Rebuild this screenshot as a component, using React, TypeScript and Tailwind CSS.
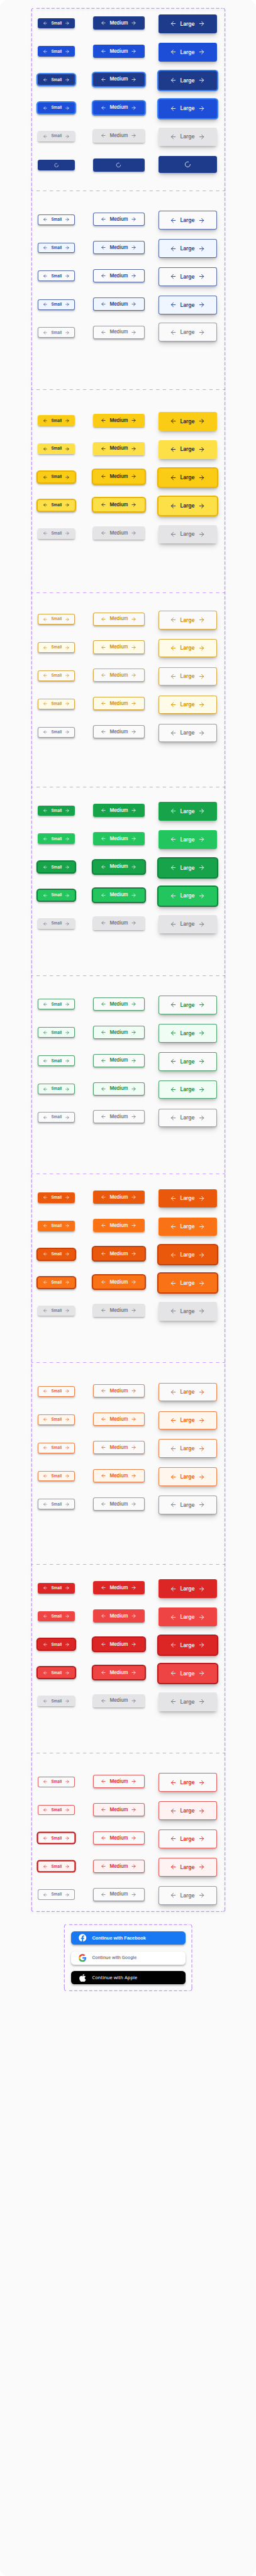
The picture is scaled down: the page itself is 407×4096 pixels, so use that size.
import { ArrowLeft, ArrowRight, LoaderCircle } from "lucide-react";
import { FaApple, FaFacebook } from "react-icons/fa";
import clsx from "clsx";

type Size = "sm" | "md" | "lg";

const SIZES: Record<
  Size,
  { label: string; box: string; text: string; icon: string; offset: string; shadow: string; ringShadow: string }
> = {
  sm: {
    label: "Small",
    box: "w-[59.2px] h-[16.9px] gap-[5.2px]",
    text: "w-[16.8px] text-[6.34px]",
    icon: "size-[7.9px]",
    offset: "mt-[5.28px]",
    shadow: "shadow-[0_2px_3px_-0.5px_rgb(0_0_0/0.2),0_1px_1.5px_-0.5px_rgb(0_0_0/0.12)]",
    ringShadow: "shadow-[0_2px_3px_1.5px_rgb(0_0_0/0.2),0_1px_1.5px_1.5px_rgb(0_0_0/0.12)]",
  },
  md: {
    label: "Medium",
    box: "w-[81.9px] h-[21.1px] gap-[5.1px]",
    text: "w-[28.9px] text-[7.4px]",
    icon: "size-[9px]",
    offset: "mt-[2.64px]",
    shadow: "shadow-[0_2px_3px_-0.5px_rgb(0_0_0/0.2),0_1px_1.5px_-0.5px_rgb(0_0_0/0.12)]",
    ringShadow: "shadow-[0_2px_3px_1.5px_rgb(0_0_0/0.2),0_1px_1.5px_1.5px_rgb(0_0_0/0.12)]",
  },
  lg: {
    label: "Large",
    box: "w-[93px] h-[29.6px] gap-[5.2px]",
    text: "w-[23px] text-[8.45px]",
    icon: "size-[11.1px]",
    offset: "",
    shadow: "shadow-[0_5.3px_8px_-1.6px_rgb(0_0_0/0.18),0_2.1px_3.2px_-1px_rgb(0_0_0/0.15)]",
    ringShadow: "shadow-[0_5.3px_8px_0.5px_rgb(0_0_0/0.18),0_2.1px_3.2px_1px_rgb(0_0_0/0.15)]",
  },
};

type Look = { skin: string; ring?: string };

type ButtonProps = Look & { size: Size; offset?: string; flat?: boolean; loading?: boolean };

function Button({ size, skin, ring, offset, flat, loading }: ButtonProps) {
  const s = SIZES[size];
  return (
    <div className={clsx("shrink-0", offset ?? s.offset)}>
      <div className={clsx("rounded-[3.2px]", !flat && (ring ? s.ringShadow : s.shadow))}>
        <button
          className={clsx(
            "flex items-center justify-center rounded-[3.2px] font-semibold leading-none",
            loading && size === "lg" ? "h-[27.5px] w-[93px]" : s.box,
            skin,
            ring,
          )}
        >
          {loading ? (
            <LoaderCircle
              className={size === "sm" ? "size-[7.6px]" : size === "md" ? "size-[8.8px]" : "size-[10.8px]"}
              strokeWidth={2}
            />
          ) : (
            <>
              <ArrowLeft className={clsx("shrink-0", s.icon)} strokeWidth={2} />
              <span className={clsx("flex shrink-0 justify-center whitespace-nowrap", s.text)}>{s.label}</span>
              <ArrowRight className={clsx("shrink-0", s.icon)} strokeWidth={2} />
            </>
          )}
        </button>
      </div>
    </div>
  );
}

type RowProps = {
  looks: [Look, Look, Look];
  offsets?: [string, string, string];
  flatSmall?: boolean;
  loading?: boolean;
};

function Row({ looks, offsets, flatSmall, loading }: RowProps) {
  return (
    <div className="flex h-[44.9px] items-start">
      <Button size="sm" {...looks[0]} offset={offsets?.[0]} flat={flatSmall} loading={loading} />
      <div className="w-[28.5px] shrink-0" />
      <Button size="md" {...looks[1]} offset={offsets?.[1]} loading={loading} />
      <div className="w-[21.7px] shrink-0" />
      <Button size="lg" {...looks[2]} offset={offsets?.[2]} loading={loading} />
    </div>
  );
}

const all = (skin: string, ring?: string): [Look, Look, Look] => [
  { skin, ring },
  { skin, ring },
  { skin, ring },
];

const DISABLED = "bg-[#e4e4e7] text-[#71717a]";
const DISABLED_OUTLINE = "border border-[#71717a]/70 bg-[#fafafa] text-[#71717a]";

type SectionData = { frame: string; rows: RowProps[] };

const filled = (frame: string, base: string, hover: string, ring: string): SectionData => ({
  frame,
  rows: [
    { looks: all(base) },
    { looks: all(hover) },
    { looks: all(base, ring) },
    { looks: all(hover, ring) },
    { looks: all(DISABLED) },
  ],
});

const outlined = (frame: string, base: string, hover: string): SectionData => ({
  frame,
  rows: [
    { looks: all(base) },
    { looks: all(hover) },
    { looks: all(base) },
    { looks: all(hover) },
    { looks: all(DISABLED_OUTLINE) },
  ],
});

const blue = filled(
  "h-[290.98px] pt-[10.57px]",
  "bg-[#1e3a8a] text-[#fafafa]",
  "bg-[#1d4ed8] text-[#fafafa]",
  "ring-[2.1px] ring-[#3b82f6]",
);
blue.rows.push({
  looks: all("bg-[#1e3a8a] text-[#fafafa]"),
  offsets: ["mt-[6.34px]", "mt-[4.2px]", ""],
  loading: true,
});

const blueOutline = outlined(
  "h-[315.39px] pt-[31.8px]",
  "border border-[#1e3a8a]/75 bg-[#fafafa] text-[#1e3a8a]",
  "border border-[#1e3a8a]/75 bg-[#eff6ff] text-[#1e3a8a]",
);
blueOutline.rows[3].offsets = ["mt-[5.8px]", "mt-[3.17px]", ""];
blueOutline.rows[4].offsets = ["mt-[5.28px]", "mt-[2.64px]", "-mt-[1.6px]"];

const redBase = "border border-[#dc2626]/75 bg-[#fafafa] text-[#dc2626]";
const redHover = "border border-[#dc2626]/75 bg-[#fef2f2] text-[#dc2626]";
const redRing = "ring-[1.6px] ring-[#b91c1c]";
const redOutline: SectionData = {
  frame: "h-[251.7px] pt-[31.9px]",
  rows: [
    { looks: all(redBase), flatSmall: true },
    { looks: all(redHover), flatSmall: true },
    { looks: [{ skin: redBase, ring: redRing }, { skin: redBase }, { skin: redBase }], flatSmall: true },
    { looks: [{ skin: redHover, ring: redRing }, { skin: redHover }, { skin: redHover }], flatSmall: true },
    { looks: all(DISABLED_OUTLINE), flatSmall: true },
  ],
};

const SECTIONS: SectionData[] = [
  blue,
  blueOutline,
  filled(
    "h-[323.3px] pt-[36.03px]",
    "bg-[#facc15] text-[#18181b]",
    "bg-[#fde047] text-[#18181b]",
    "ring-[2.1px] ring-[#eab308]",
  ),
  outlined(
    "h-[309.05px] pt-[28.63px]",
    "border border-[#ca8a04]/75 bg-[#fafafa] text-[#ca8a04]",
    "border border-[#ca8a04]/75 bg-[#fefce8] text-[#ca8a04]",
  ),
  filled(
    "h-[300px] pt-[23.88px]",
    "bg-[#16a34a] text-[#fafafa]",
    "bg-[#22c55e] text-[#fafafa]",
    "ring-[2.1px] ring-[#15803d]",
  ),
  outlined(
    "h-[315.4px] pt-[31.85px]",
    "border border-[#15803d]/75 bg-[#fafafa] text-[#15803d]",
    "border border-[#15803d]/75 bg-[#f0fdf4] text-[#15803d]",
  ),
  filled(
    "h-[300.05px] pt-[23.93px]",
    "bg-[#ea580c] text-[#fafafa]",
    "bg-[#f97316] text-[#fafafa]",
    "ring-[2.1px] ring-[#c2410c]",
  ),
  outlined(
    "h-[320.75px] pt-[31.85px]",
    "border border-[#ea580c]/75 bg-[#fafafa] text-[#ea580c]",
    "border border-[#ea580c]/75 bg-[#fff7ed] text-[#ea580c]",
  ),
  filled(
    "h-[299.95px] pt-[23.88px]",
    "bg-[#dc2626] text-[#fafafa]",
    "bg-[#ef4444] text-[#fafafa]",
    "ring-[2.1px] ring-[#b91c1c]",
  ),
  redOutline,
];

/* Dashed outline, 10 on / 5 off on every side, with solid rounded corners. */
function DashedOutline({ w, h, className }: { w: number; h: number; className?: string }) {
  const r = w - 0.5;
  const b = h - 0.5;
  return (
    <svg
      className={clsx("pointer-events-none absolute inset-0 size-full overflow-visible", className)}
      viewBox={`0 0 ${w} ${h}`}
      preserveAspectRatio="none"
      fill="none"
      stroke="#9747ff"
      strokeWidth="1.3"
    >
      <path d={`M0.5 10V5.5A5 5 0 0 1 5.5 0.5M${r - 5} 0.5A5 5 0 0 1 ${r} 5.5V10`} />
      <path d={`M0.5 ${b - 10}V${b - 5}A5 5 0 0 0 5.5 ${b}M${r - 5} ${b}A5 5 0 0 0 ${r} ${b - 5}V${b - 10}`} />
      <path strokeDasharray="10 5" d={`M15 0.5H${w - 8}M15 ${b}H${w - 8}M0.5 15V${h - 10}M${r} 15V${h - 10}`} />
    </svg>
  );
}

function Divider() {
  return (
    <svg
      className="absolute inset-x-0 -bottom-[0.5px] h-px w-full"
      viewBox="0 0 582.5 2"
      preserveAspectRatio="none"
      stroke="#c9a0ff"
      strokeWidth="2"
    >
      <path strokeDasharray="10 10" strokeDashoffset="5" d="M0 1H582.5" />
    </svg>
  );
}

function GoogleMark() {
  return (
    <svg viewBox="1 1 22 22" className="size-[12.4px]">
      <path fill="#4285F4" d="M22.56 12.25c0-.78-.07-1.53-.2-2.25H12v4.26h5.92c-.26 1.37-1.04 2.53-2.21 3.31v2.77h3.57c2.08-1.92 3.28-4.74 3.28-8.09z" />
      <path fill="#34A853" d="M12 23c2.97 0 5.46-.98 7.28-2.66l-3.57-2.77c-.98.66-2.23 1.06-3.71 1.06-2.86 0-5.29-1.93-6.16-4.53H2.18v2.84C3.99 20.53 7.7 23 12 23z" />
      <path fill="#FBBC05" d="M5.84 14.09c-.22-.66-.35-1.36-.35-2.09s.13-1.43.35-2.09V7.07H2.18C1.43 8.55 1 10.22 1 12s.43 3.45 1.18 4.93l2.85-2.22.81-.62z" />
      <path fill="#EA4335" d="M12 5.38c1.62 0 3.06.56 4.21 1.64l3.15-3.15C17.45 2.09 14.97 1 12 1 7.7 1 3.99 3.47 2.18 7.07l3.66 2.84c.87-2.6 3.3-4.53 6.16-4.53z" />
    </svg>
  );
}

const SOCIAL =
  "flex h-[21.1px] w-[182.3px] items-center rounded-[5.3px] pl-[12.7px] text-[7.4px] leading-none whitespace-nowrap shadow-[0_2px_3px_rgb(0_0_0/0.28),0_0_1.5px_rgb(0_0_0/0.1)]";
const MARK = "mr-[8.5px] flex w-[12.6px] shrink-0 items-center justify-center";

export default function App() {
  return (
    <div className="h-[4096px] w-[407px] overflow-hidden rounded-[12.7px] bg-[#fafafa] pt-[12.68px] font-['Inter',sans-serif]">
      <div className="relative ml-[49.68px] h-[3026.6px] w-[307.9px]">
        {SECTIONS.map((section, i) => (
          <section key={i} className={clsx("relative pl-[10.57px]", section.frame)}>
            {section.rows.map((row, j) => (
              <Row key={j} {...row} />
            ))}
            {i < SECTIONS.length - 1 && <Divider />}
          </section>
        ))}
        <DashedOutline w={582.5} h={5729} className="drop-shadow-[0_2px_1.5px_rgb(0_0_0/0.2)]" />
      </div>

      <div className="relative mt-[21.2px] ml-[102.2px] flex h-[105.6px] w-[203.3px] flex-col items-start gap-[10.57px] pt-[10.5px] pl-[10.5px]">
        <button className={clsx(SOCIAL, "bg-[#1877f2] font-['Liberation_Sans',sans-serif] font-bold text-white")}>
          <span className={MARK}>
            <FaFacebook className="size-[12.4px]" />
          </span>
          Continue with Facebook
        </button>
        <button className={clsx(SOCIAL, "bg-white font-['Roboto',sans-serif] font-medium text-[#757575]")}>
          <span className={MARK}>
            <GoogleMark />
          </span>
          Continue with Google
        </button>
        <button className={clsx(SOCIAL, "bg-black font-['Noto_Sans',sans-serif] text-white")}>
          <span className={MARK}>
            <FaApple className="size-[14px]" />
          </span>
          <span className="-mt-px tracking-[0.08px]">Continue with Apple</span>
        </button>
        <DashedOutline w={384.7} h={200} />
      </div>
    </div>
  );
}
